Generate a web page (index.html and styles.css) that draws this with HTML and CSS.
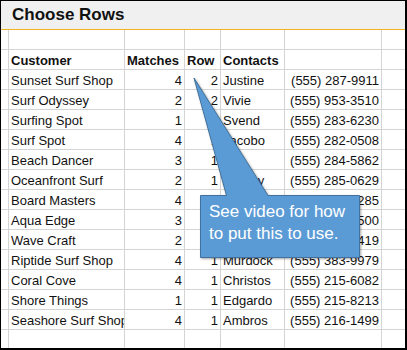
FILE: index.html
```html
<!DOCTYPE html>
<html>
<head>
<meta charset="utf-8">
<title>Choose Rows</title>
<link rel="stylesheet" href="styles.css">
</head>
<body>
<div class="frame">
  <div class="titlebar">Choose Rows</div>
  <div class="sheet">
    <div class="row"><div class="c"></div><div class="c"></div><div class="c"></div><div class="c"></div><div class="c"></div><div class="c"></div><div class="c"></div></div>
    <div class="row head"><div class="c"></div><div class="c">Customer</div><div class="c">Matches</div><div class="c">Row</div><div class="c">Contacts</div><div class="c"></div><div class="c"></div></div>
    <div class="row"><div class="c"></div><div class="c">Sunset Surf Shop</div><div class="c num">4</div><div class="c num">2</div><div class="c">Justine</div><div class="c num">(555) 287-9911</div><div class="c"></div></div>
    <div class="row"><div class="c"></div><div class="c">Surf Odyssey</div><div class="c num">2</div><div class="c num">2</div><div class="c">Vivie</div><div class="c num">(555) 953-3510</div><div class="c"></div></div>
    <div class="row"><div class="c"></div><div class="c">Surfing Spot</div><div class="c num">1</div><div class="c num">1</div><div class="c">Svend</div><div class="c num">(555) 283-6230</div><div class="c"></div></div>
    <div class="row"><div class="c"></div><div class="c">Surf Spot</div><div class="c num">4</div><div class="c num">1</div><div class="c">Jacobo</div><div class="c num">(555) 282-0508</div><div class="c"></div></div>
    <div class="row"><div class="c"></div><div class="c">Beach Dancer</div><div class="c num">3</div><div class="c num">1</div><div class="c">Ian</div><div class="c num">(555) 284-5862</div><div class="c"></div></div>
    <div class="row"><div class="c"></div><div class="c">Oceanfront Surf</div><div class="c num">2</div><div class="c num">1</div><div class="c">Audrey</div><div class="c num">(555) 285-0629</div><div class="c"></div></div>
    <div class="row"><div class="c"></div><div class="c">Board Masters</div><div class="c num">4</div><div class="c num">1</div><div class="c">Lorena</div><div class="c num">(555) 286-4285</div><div class="c"></div></div>
    <div class="row"><div class="c"></div><div class="c">Aqua Edge</div><div class="c num">3</div><div class="c num">1</div><div class="c">Hamid</div><div class="c num">(555) 287-3500</div><div class="c"></div></div>
    <div class="row"><div class="c"></div><div class="c">Wave Craft</div><div class="c num">2</div><div class="c num">1</div><div class="c">Marisol</div><div class="c num">(555) 288-7419</div><div class="c"></div></div>
    <div class="row"><div class="c"></div><div class="c">Riptide Surf Shop</div><div class="c num">4</div><div class="c num">1</div><div class="c">Murdock</div><div class="c num">(555) 383-9979</div><div class="c"></div></div>
    <div class="row"><div class="c"></div><div class="c">Coral Cove</div><div class="c num">4</div><div class="c num">1</div><div class="c">Christos</div><div class="c num">(555) 215-6082</div><div class="c"></div></div>
    <div class="row"><div class="c"></div><div class="c">Shore Things</div><div class="c num">1</div><div class="c num">1</div><div class="c">Edgardo</div><div class="c num">(555) 215-8213</div><div class="c"></div></div>
    <div class="row"><div class="c"></div><div class="c">Seashore Surf Shop</div><div class="c num">4</div><div class="c num">1</div><div class="c">Ambros</div><div class="c num">(555) 216-1499</div><div class="c"></div></div>
    <div class="row"><div class="c"></div><div class="c"></div><div class="c"></div><div class="c"></div><div class="c"></div><div class="c"></div><div class="c"></div></div>
  </div>
</div>

<!-- speech-bubble note laid over the sheet -->
<svg class="bubble" width="407" height="350" viewBox="0 0 407 350">
  <path d="M200.5 195.5 H226.5 L194 78 L268 195.5 H359.5 V257.5 H200.5 Z" fill="#5b9bd5" stroke="#41719c" stroke-width="1"/>
</svg>
<div class="note">See video for how<br>to put this to use.</div>
</body>
</html>
```

FILE: styles.css
```css
html, body {
  margin: 0;
  padding: 0;
  background: #fff;
}

body {
  position: relative;
  width: 407px;
  height: 350px;
  overflow: hidden;
}

.frame {
  box-sizing: border-box;
  width: 407px;
  height: 350px;
  border: 1px solid #000;
  border-right-width: 2px;
  border-bottom-width: 2px;
  overflow: hidden;
}

.titlebar {
  height: 24px;
  padding: 4px 0 0 11px;
  line-height: 24px;
  background: #f0f0f0;
  border-bottom: 1px solid #f0b323;
  font: bold 17px "Liberation Sans", Arial, sans-serif;
  color: #111;
}

.sheet {
  font: 13px "Liberation Sans", Arial, sans-serif;
  color: #111;
}

.row {
  display: grid;
  grid-template-columns: 8px 116px 60px 36px 64px 97px 1fr;
  height: 20px;
}

.c {
  box-sizing: border-box;
  height: 20px;
  padding: 1px 2px 0;
  line-height: 19px;
  border-right: 1px solid #d4d4d4;
  border-bottom: 1px solid #d4d4d4;
  white-space: nowrap;
  overflow: hidden;
}

.c:last-child {
  border-right: none;
}

.num {
  text-align: right;
}

.head .c {
  font-weight: bold;
}

.bubble {
  position: absolute;
  left: 0;
  top: 0;
  filter: drop-shadow(1px 1px 1px rgba(0, 0, 0, 0.35));
}

.note {
  position: absolute;
  left: 200px;
  top: 195px;
  padding: 6px 0 0 9px;
  font: 17px/22px "Liberation Sans", Arial, sans-serif;
  color: #fff;
  white-space: nowrap;
}
```
